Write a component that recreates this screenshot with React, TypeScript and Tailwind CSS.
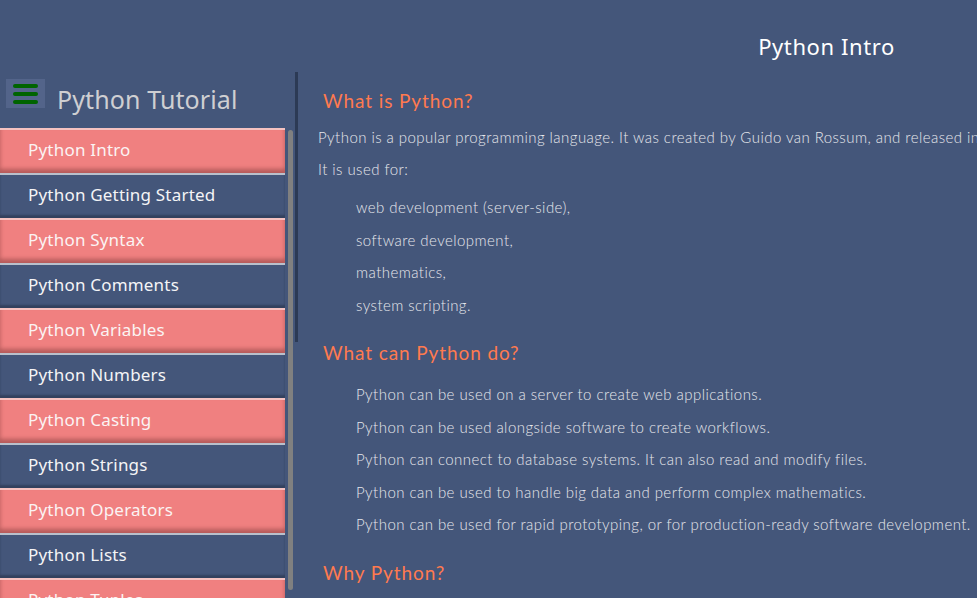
const topics = [
    "Python Intro",
    "Python Getting Started",
    "Python Syntax",
    "Python Comments",
    "Python Variables",
    "Python Numbers",
    "Python Casting",
    "Python Strings",
    "Python Operators",
    "Python Lists",
    "Python Tuples",
];

const uses = [
    "web development (server-side),",
    "software development,",
    "mathematics,",
    "system scripting.",
];

const abilities = [
    "Python can be used on a server to create web applications.",
    "Python can be used alongside software to create workflows.",
    "Python can connect to database systems. It can also read and modify files.",
    "Python can be used to handle big data and perform complex mathematics.",
    "Python can be used for rapid prototyping, or for production-ready software development.",
];

function Heading({ children }: { children: string }) {
    return (
        <h2 className="ml-[5px] text-[19px] leading-[24px] text-[#ff7a4f] font-normal tracking-[0.9px]">
            {children}
        </h2>
    );
}

export default function App() {
    return (
        <div className="h-[598px] w-full overflow-hidden bg-[#44567a] font-['Lato',sans-serif]">
            <header className="h-[72px] flex justify-end pr-[82px] pt-[32px]">
                <h1 className="h-fit text-[22px] leading-[28px] text-white font-['Noto_Sans',sans-serif] tracking-[0.6px]">
                    Python Intro
                </h1>
            </header>
            <div className="flex">
                <aside className="w-[295px] shrink-0 flex flex-col">
                    <div className="h-[56px] flex items-start pt-[7px] pl-[6px] gap-3">
                        <button className="w-[39px] h-[29px] bg-[#53648a] flex flex-col items-center justify-center gap-[4px]">
                            <span className="block w-[25px] h-[4px] rounded-full bg-[#006400]" />
                            <span className="block w-[25px] h-[4px] rounded-full bg-[#006400]" />
                            <span className="block w-[25px] h-[4px] rounded-full bg-[#006400]" />
                        </button>
                        <span className="mt-[5px] text-[25px] leading-[30px] text-[#cfcfd2] font-['Noto_Sans',sans-serif] tracking-[0.1px]">
                            Python Tutorial
                        </span>
                    </div>
                    <div className="flex h-[470px]">
                        <ul className="w-[285px] shrink-0">
                            {topics.map((topic, i) =>
                                i % 2 === 0 ? (
                                    <li
                                        key={topic}
                                        className="h-[45px] flex items-center pl-7 pb-[3px] bg-[#f08080] border-t-2 border-[#f6c2c0] shadow-[inset_0_-4px_4px_rgba(70,20,20,0.35)] text-[17px] text-[#fbf3f3] font-['Noto_Sans',sans-serif] tracking-[0.2px]"
                                    >
                                        {topic}
                                    </li>
                                ) : (
                                    <li
                                        key={topic}
                                        className="h-[45px] flex items-center pl-7 pb-[3px] bg-[#44567a] border-t-2 border-[#b8c0cc] shadow-[inset_0_-3px_2px_rgba(20,25,40,0.35)] text-[17px] text-[#f4f4f6] font-['Noto_Sans',sans-serif] tracking-[0.2px]"
                                    >
                                        {topic}
                                    </li>
                                ),
                            )}
                        </ul>
                        <div className="ml-[3px] mt-[2px] w-[5px] h-[460px] rounded-sm bg-[#808080]" />
                    </div>
                </aside>
                <div className="w-[3px] h-[270px] bg-[#2c3a55] shrink-0" />
                <main className="pl-[20px] pt-[17px] text-[15px] text-[#e6e7ec] font-light tracking-[0.45px] whitespace-nowrap">
                    <Heading>What is Python?</Heading>
                    <p className="mt-[8px] leading-[32px]">
                        Python is a popular programming language. It was created by Guido van Rossum, and released in 1991.
                    </p>
                    <p className="leading-[32px]">It is used for:</p>
                    <ul className="mt-[6px] pl-[38px]">
                        {uses.map((u) => (
                            <li key={u} className="leading-[32.5px]">
                                {u}
                            </li>
                        ))}
                    </ul>
                    <div className="mt-[20px]">
                        <Heading>What can Python do?</Heading>
                    </div>
                    <ul className="mt-[13px] pl-[38px]">
                        {abilities.map((a) => (
                            <li key={a} className="leading-[32.5px]">
                                {a}
                            </li>
                        ))}
                    </ul>
                    <div className="mt-[20px]">
                        <Heading>Why Python?</Heading>
                    </div>
                </main>
            </div>
        </div>
    );
}
